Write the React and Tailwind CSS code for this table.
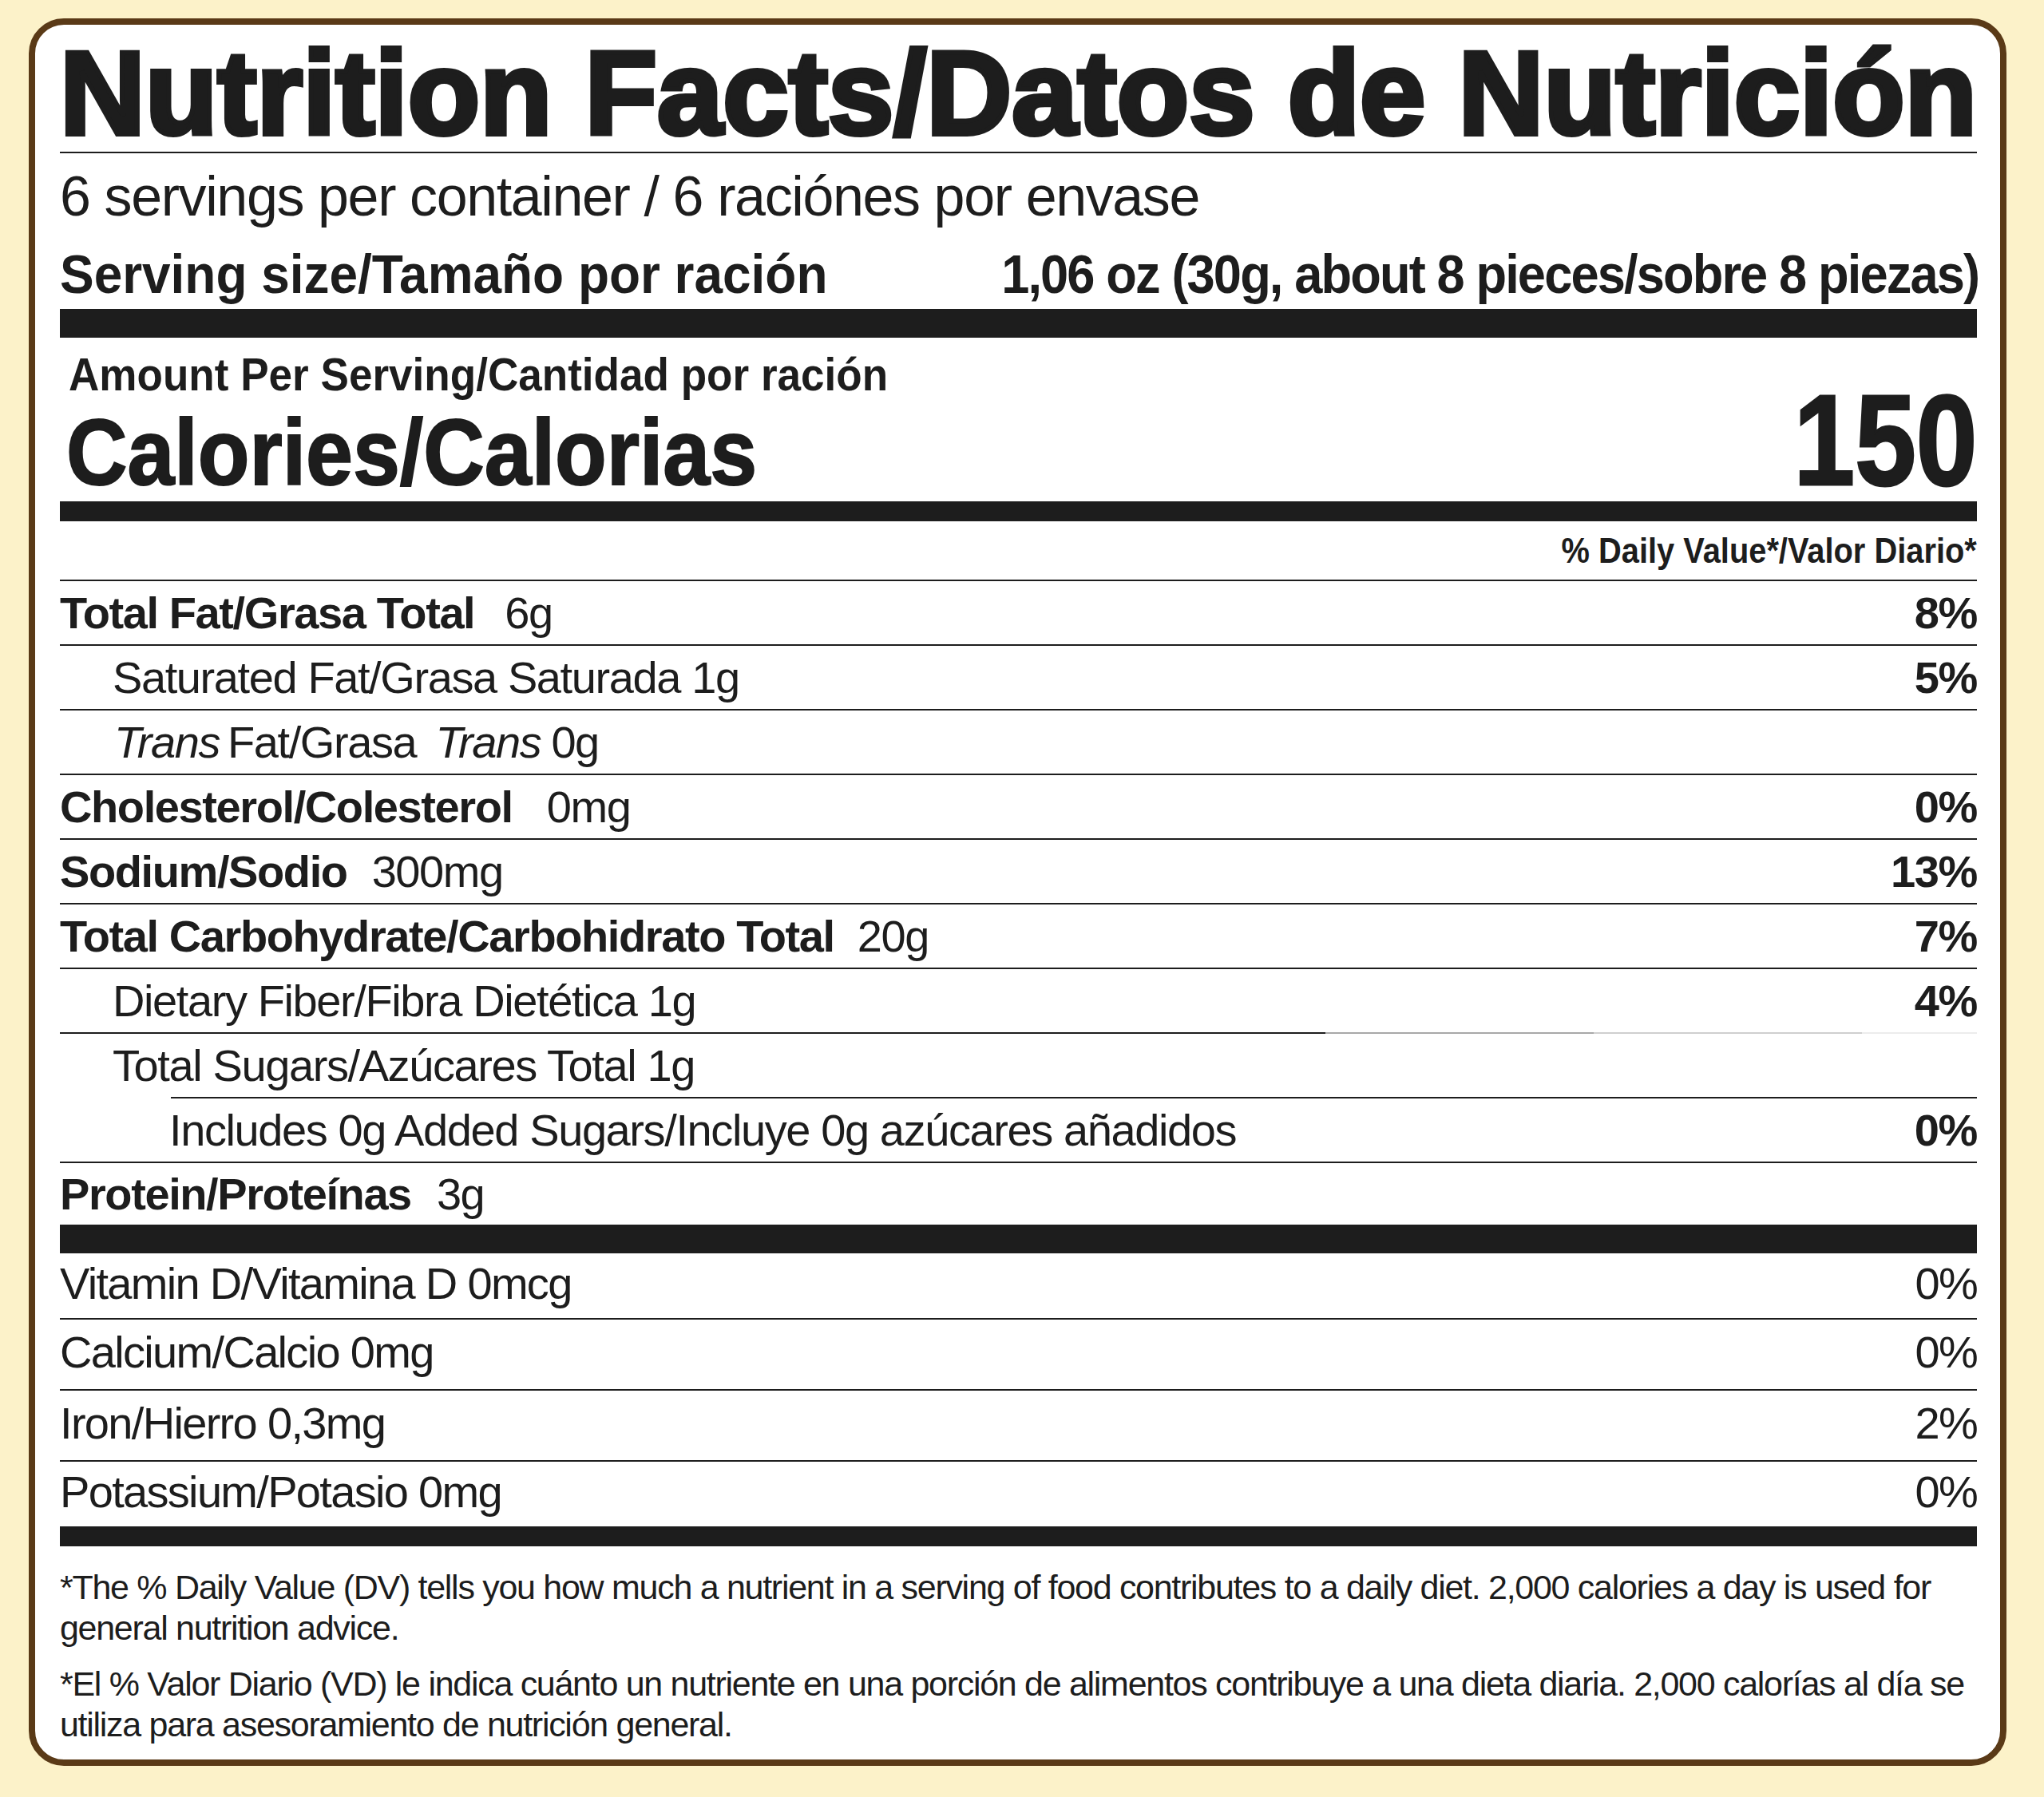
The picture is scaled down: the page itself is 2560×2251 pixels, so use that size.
import React from "react";

function Rule({ className = "" }) {
  return <div className={`h-[2px] bg-[#1d1d1d] ${className}`} />;
}

function Row({ children, pct, h = "h-[79px]", bold = true, className = "" }) {
  return (
    <div className={`flex items-center justify-between whitespace-nowrap ${h} ${className}`}>
      <div>{children}</div>
      {pct && <span className={bold ? "font-bold" : "font-normal"}>{pct}</span>}
    </div>
  );
}

export default function App() {
  return (
    <div className="min-h-screen bg-[#fcf2c9] pl-[36px] pt-[23px] font-['Liberation_Sans',Arial,sans-serif] text-[#1d1d1d]">
      <div className="h-[2189px] w-[2477px] rounded-[44px] border-[8px] border-[#5a3a17] bg-white pl-[31px] pr-[29px] pt-[13px]">
        <h1 className="whitespace-nowrap text-[148px] font-bold leading-[146px] [-webkit-text-stroke:6px_#1d1d1d]">
          Nutrition Facts/Datos de Nutrición
        </h1>
        <Rule />
        <p className="mt-[19px] whitespace-nowrap text-[70px] leading-[70px] tracking-[-0.02em]">
          6 servings per container / 6 raciónes por envase
        </p>
        <div className="mt-[28px] flex items-baseline justify-between whitespace-nowrap text-[68px] font-bold leading-[68px]">
          <span className="inline-block origin-left scale-x-[0.94]">Serving size/Tamaño por ración</span>
          <span className="-mr-[2px] inline-block origin-right scale-x-[0.93] tracking-[-0.03em]">
            1,06 oz (30g, about 8 pieces/sobre 8 piezas)
          </span>
        </div>
        <div className="mt-[10px] h-[36px] bg-[#1d1d1d]" />

        <div className="flex items-end justify-between whitespace-nowrap">
          <div>
            <p className="mt-[17px] pl-[11px] text-[58px] font-bold leading-[58px]">
              <span className="inline-block origin-left scale-x-[0.915]">Amount Per Serving/Cantidad por ración</span>
            </p>
            <p className="mt-[10px] pl-[8px] text-[117px] font-bold leading-[117px] [-webkit-text-stroke:2px_#1d1d1d]">
              <span className="inline-block origin-left scale-x-[0.905]">Calories/Calorias</span>
            </p>
          </div>
          <span className="inline-block origin-right scale-x-[0.85] text-[162px] font-bold leading-[148px] [-webkit-text-stroke:3px_#1d1d1d]">
            150
          </span>
        </div>
        <div className="mt-[3px] h-[25px] bg-[#1d1d1d]" />

        <p className="mt-[14px] whitespace-nowrap text-right text-[45px] font-bold leading-[45px]">
          <span className="inline-block origin-right scale-x-[0.885]">% Daily Value*/Valor Diario*</span>
        </p>
        <Rule className="mt-[14px]" />

        {/* nutrients */}
        <div className="text-[56px] leading-none tracking-[-0.025em]">
          <Row pct="8%">
            <b>Total Fat/Grasa Total</b>
            <span className="ml-[38px]">6g</span>
          </Row>
          <Rule />
          <Row pct="5%">
            <span className="pl-[66px]">Saturated Fat/Grasa Saturada 1g</span>
          </Row>
          <Rule />
          <Row>
            <span className="pl-[68px]">
              <i>Trans</i>
              <span className="ml-[10px]">Fat/Grasa</span>
              <i className="ml-[24px]">Trans</i>
              <span className="ml-[13px]">0g</span>
            </span>
          </Row>
          <Rule />
          <Row pct="0%">
            <b>Cholesterol/Colesterol</b>
            <span className="ml-[43px]">0mg</span>
          </Row>
          <Rule />
          <Row pct="13%">
            <b>Sodium/Sodio</b>
            <span className="ml-[31px]">300mg</span>
          </Row>
          <Rule />
          <Row pct="7%">
            <b>Total Carbohydrate/Carbohidrato Total</b>
            <span className="ml-[29px]">20g</span>
          </Row>
          <Rule />
          <Row pct="4%">
            <span className="pl-[66px]">Dietary Fiber/Fibra Dietética 1g</span>
          </Row>
          <div className="h-[2px] bg-[linear-gradient(to_right,#1d1d1d_66%,#a8a8a8_66%,#a8a8a8_80%,#cfcfcf_80%,#cfcfcf_94%,#ececec_94%)]" />
          <Row>
            <span className="pl-[66px]">Total Sugars/Azúcares Total 1g</span>
          </Row>
          <Rule className="ml-[139px]" />
          <Row pct="0%">
            <span className="pl-[137px]">Includes 0g Added Sugars/Incluye 0g azúcares añadidos</span>
          </Row>
          <Rule />
          <Row h="h-[77px]">
            <b>Protein/Proteínas</b>
            <span className="ml-[32px]">3g</span>
          </Row>
        </div>
        <div className="h-[36px] bg-[#1d1d1d]" />

        {/* vitamins & minerals */}
        <div className="text-[56px] leading-none tracking-[-0.03em]">
          <Row h="h-[81px]" pct="0%" bold={false} className="pb-[6px]">
            Vitamin D/Vitamina D 0mcg
          </Row>
          <Rule />
          <Row h="h-[87px]" pct="0%" bold={false} className="pb-[6px]">
            Calcium/Calcio 0mg
          </Row>
          <Rule />
          <Row h="h-[87px]" pct="2%" bold={false} className="pb-[6px]">
            Iron/Hierro 0,3mg
          </Row>
          <Rule />
          <Row h="h-[81px]" pct="0%" bold={false} className="pb-[6px]">
            Potassium/Potasio 0mg
          </Row>
        </div>
        <div className="h-[25px] bg-[#1d1d1d]" />

        <div className="mt-[26px] text-[43px] leading-[51px] tracking-[-0.03em]">
          <p>
            <span className="block whitespace-nowrap">
              *The % Daily Value (DV) tells you how much a nutrient in a serving of food contributes to a daily diet. 2,000 calories a day is used for
            </span>
            <span className="block whitespace-nowrap">general nutrition advice.</span>
          </p>
          <p className="mt-[19px]">
            <span className="block whitespace-nowrap">
              *El % Valor Diario (VD) le indica cuánto un nutriente en una porción de alimentos contribuye a una dieta diaria. 2,000 calorías al día se
            </span>
            <span className="block whitespace-nowrap">utiliza para asesoramiento de nutrición general.</span>
          </p>
        </div>
      </div>
    </div>
  );
}
